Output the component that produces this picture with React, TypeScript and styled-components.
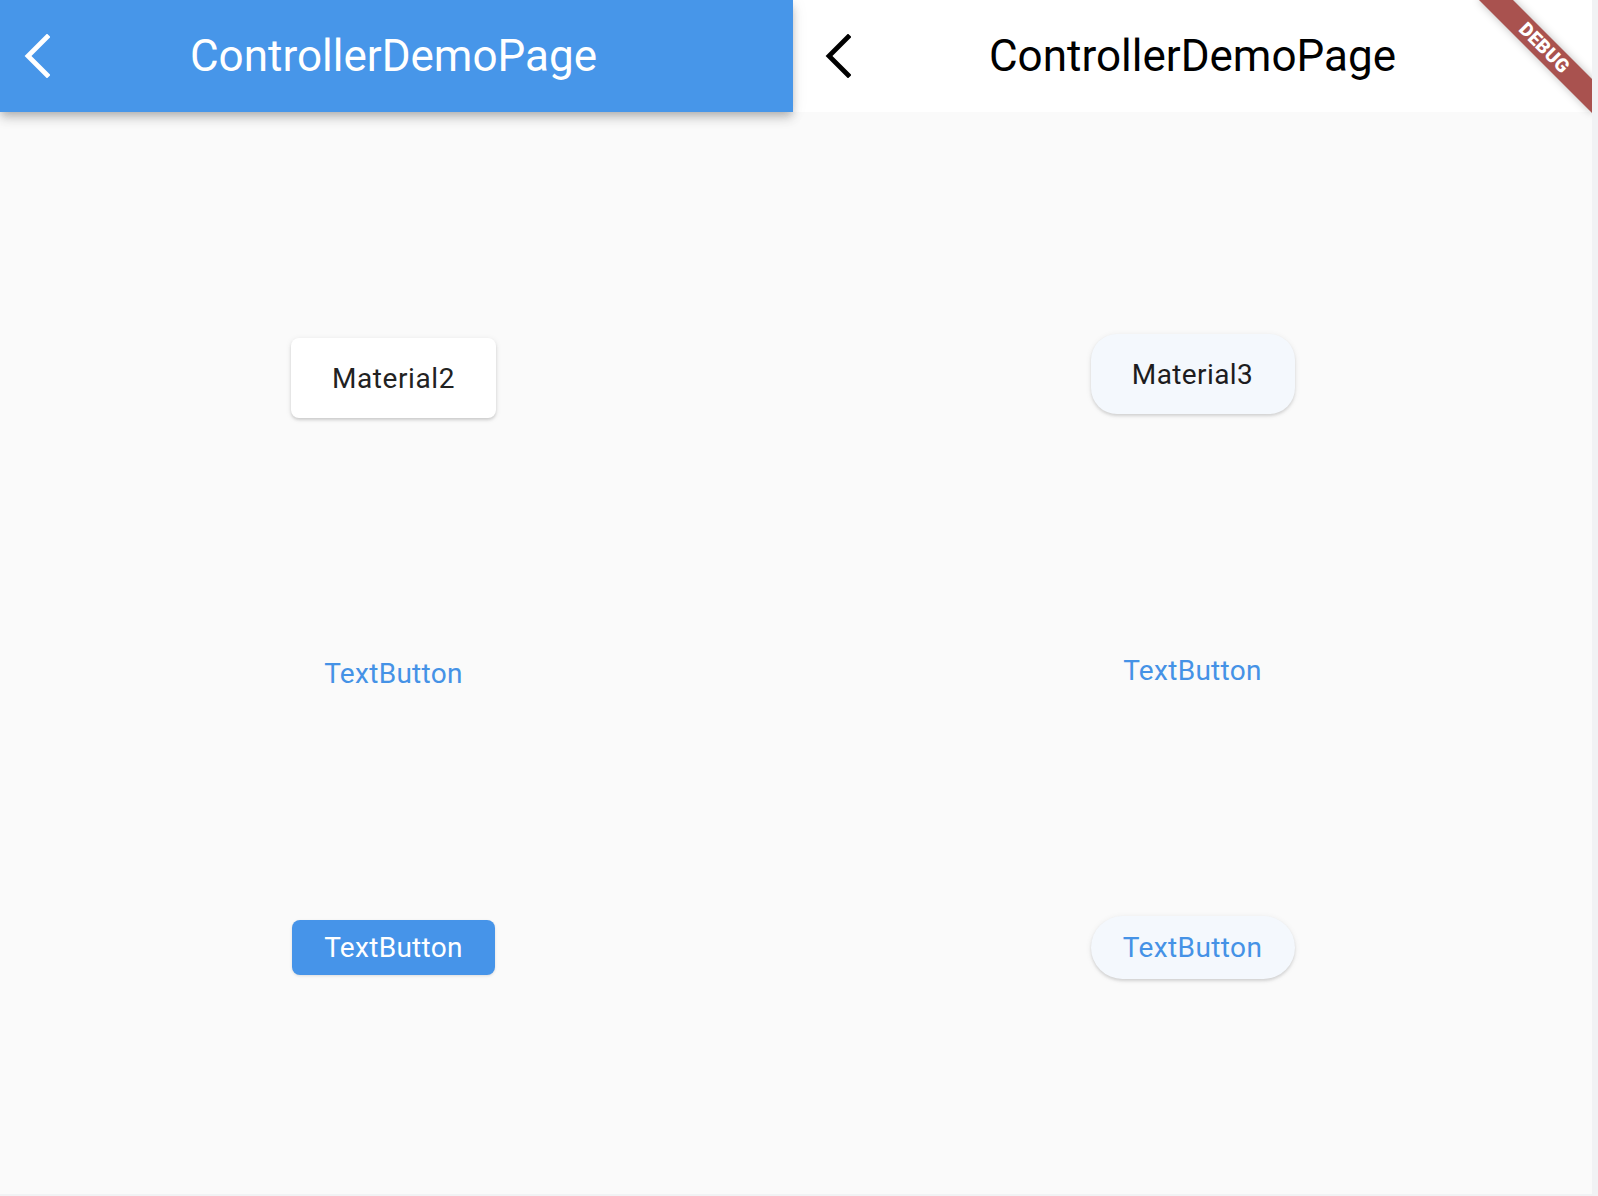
import React from "react";
import styled, { createGlobalStyle } from "styled-components";

const GlobalStyle = createGlobalStyle`
  html, body {
    margin: 0;
    padding: 0;
    background: #f1f2f4;
    font-family: Roboto, "Noto Sans", "Liberation Sans", sans-serif;
  }
`;

const Screen = styled.div`
  position: relative;
  width: 1592px;
  height: 1194px;
  overflow: hidden;
  display: flex;
  background: #fafafa;
`;

const Pane = styled.div<{ $width?: number }>`
  display: flex;
  flex-direction: column;
  width: ${({ $width }) => ($width ? `${$width}px` : "auto")};
  flex: ${({ $width }) => ($width ? "none" : "1")};
  background: #fafafa;
`;

const AppBar = styled.header<{ $m3?: boolean; $trail: number }>`
  position: relative;
  z-index: ${({ $m3 }) => ($m3 ? 1 : 2)};
  height: 112px;
  flex: none;
  display: grid;
  grid-template-columns: 112px 1fr ${({ $trail }) => $trail}px;
  align-items: center;
  background: ${({ $m3 }) => ($m3 ? "#ffffff" : "#4796e9")};
  color: ${({ $m3 }) => ($m3 ? "#000000" : "#ffffff")};
  box-shadow: ${({ $m3 }) =>
    $m3
      ? "none"
      : "0 4px 8px -2px rgba(0,0,0,0.2), 0 8px 10px 0 rgba(0,0,0,0.1), 0 2px 16px 0 rgba(0,0,0,0.08)"};
`;

const BackButton = styled.div<{ $inset: number }>`
  display: flex;
  align-items: center;
  height: 100%;
  padding-left: ${({ $inset }) => $inset}px;
`;

const Title = styled.h1`
  margin: 0;
  text-align: center;
  font-size: 44px;
  font-weight: 400;
  line-height: 52px;
  white-space: nowrap;
`;

const Body = styled.main<{ $top: number; $right?: number }>`
  flex: 1;
  display: flex;
  flex-direction: column;
  align-items: center;
  padding-top: ${({ $top }) => $top}px;
  padding-right: ${({ $right }) => $right ?? 0}px;
`;

const ElevatedM2 = styled.button<{ $mt?: number }>`
  margin-top: ${({ $mt }) => $mt ?? 0}px;
  width: 205px;
  height: 80px;
  border: none;
  border-radius: 8px;
  background: #ffffff;
  color: #222222;
  font-family: inherit;
  font-size: 28px;
  letter-spacing: 0.6px;
  box-shadow: 0 2px 3px rgba(0, 0, 0, 0.14), 0 1px 6px rgba(0, 0, 0, 0.08);
`;

const ElevatedM3 = styled.button<{
  $mt?: number;
  $h: number;
  $radius: number;
  $blue?: boolean;
}>`
  margin-top: ${({ $mt }) => $mt ?? 0}px;
  width: 204px;
  height: ${({ $h }) => $h}px;
  border: none;
  border-radius: ${({ $radius }) => $radius}px;
  background: #f4f8fd;
  color: ${({ $blue }) => ($blue ? "#4592e6" : "#1d1c20")};
  font-family: inherit;
  font-size: 28px;
  letter-spacing: 0.4px;
  box-shadow: 0 2px 3px rgba(0, 0, 0, 0.12), 0 1px 6px rgba(0, 0, 0, 0.07);
`;

const FlatText = styled.button<{ $mt?: number }>`
  margin-top: ${({ $mt }) => $mt ?? 0}px;
  height: 56px;
  padding: 0 16px;
  border: none;
  background: transparent;
  color: #4592e6;
  font-family: inherit;
  font-size: 28px;
  letter-spacing: 0.3px;
`;

const FilledM2 = styled.button<{ $mt?: number }>`
  margin-top: ${({ $mt }) => $mt ?? 0}px;
  width: 203px;
  height: 55px;
  border: none;
  border-radius: 8px;
  background: #4694e9;
  color: #ffffff;
  font-family: inherit;
  font-size: 28px;
  letter-spacing: 0.3px;
  box-shadow: 0 1px 3px rgba(0, 0, 0, 0.12);
`;

const Ribbon = styled.div`
  position: absolute;
  z-index: 5;
  left: ${1592 - 48 - 80}px;
  top: ${48 - 12}px;
  width: 160px;
  height: 24px;
  transform: rotate(45deg);
  background: #a9524f;
  box-shadow: 0 0 8px rgba(0, 0, 0, 0.25);
  color: #ffffff;
  font-family: Roboto, "Liberation Sans", sans-serif;
  font-size: 19px;
  font-weight: 900;
  line-height: 24px;
  text-align: center;
  letter-spacing: 0.3px;
`;

const Chevron = ({ color }: { color: string }) => (
  <svg width="26" height="44" viewBox="0 0 26 44">
    <polyline
      points="23,3 4,22 23,41"
      fill="none"
      stroke={color}
      strokeWidth="4.8"
      strokeLinecap="square"
    />
  </svg>
);

export default function App() {
  return (
    <>
      <GlobalStyle />
      <Screen>
        <Pane $width={793}>
          <AppBar $trail={118}>
            <BackButton $inset={24}>
              <Chevron color="#ffffff" />
            </BackButton>
            <Title>ControllerDemoPage</Title>
            <span />
          </AppBar>
          <Body $top={226} $right={6}>
            <ElevatedM2>Material2</ElevatedM2>
            <FlatText $mt={227}>TextButton</FlatText>
            <FilledM2 $mt={219}>TextButton</FilledM2>
          </Body>
        </Pane>
        <Pane>
          <AppBar $m3 $trail={112}>
            <BackButton $inset={32}>
              <Chevron color="#000000" />
            </BackButton>
            <Title>ControllerDemoPage</Title>
            <span />
          </AppBar>
          <Body $top={222}>
            <ElevatedM3 $h={80} $radius={26}>
              Material3
            </ElevatedM3>
            <FlatText $mt={228}>TextButton</FlatText>
            <ElevatedM3 $mt={218} $h={63} $radius={32} $blue>
              TextButton
            </ElevatedM3>
          </Body>
        </Pane>
        <Ribbon>DEBUG</Ribbon>
      </Screen>
    </>
  );
}
